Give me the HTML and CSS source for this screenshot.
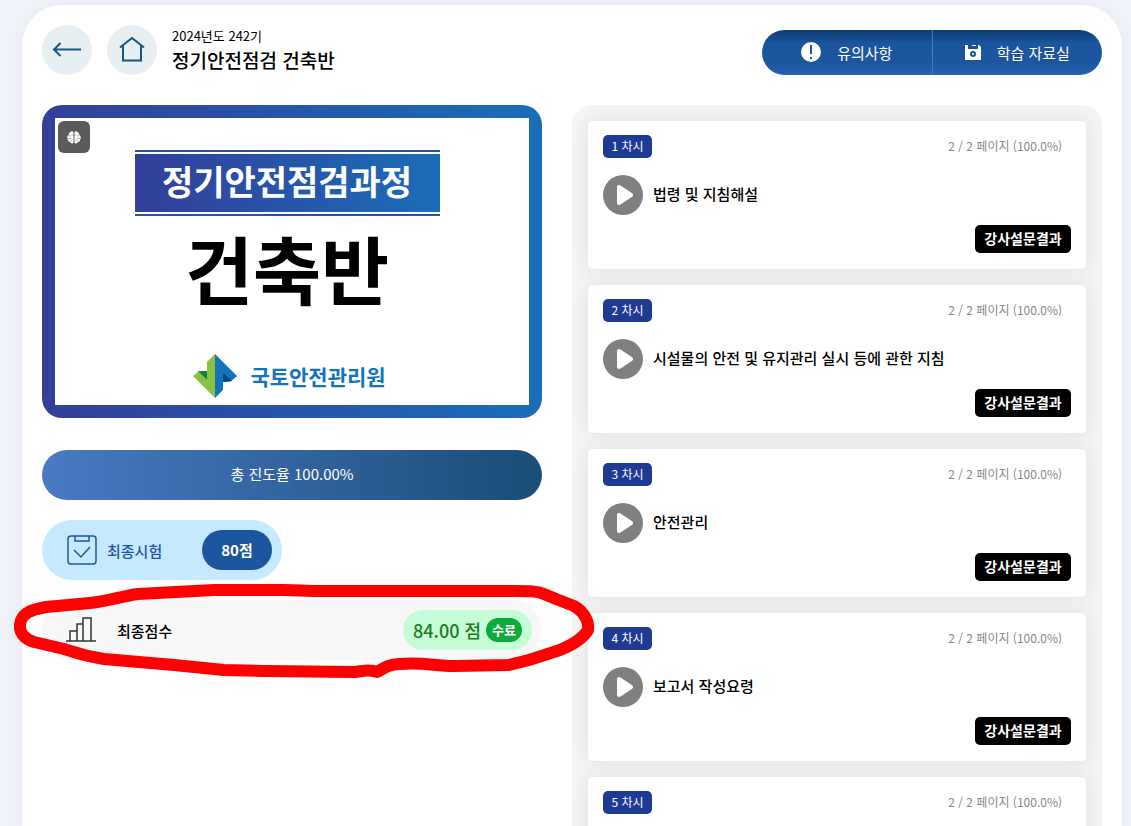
FILE: index.html
```html
<!DOCTYPE html>
<html lang="ko">
<head>
  <meta charset="UTF-8">
  <meta name="viewport" content="width=device-width, initial-scale=1.0">
  <title>정기안전점검 건축반</title>
  <link rel="stylesheet" href="styles.css">
</head>
<body>
  <div class="sheet">
    <header class="header">
      <a href="#" class="round-btn back" aria-label="뒤로">
        <svg width="30" height="18" viewBox="0 0 30 18" fill="none" stroke="#15587f" stroke-width="2"><path d="M29 8.500H2M8.500 2L2 8.500 8.500 15"/></svg>
      </a>
      <a href="#" class="round-btn home" aria-label="홈">
        <svg width="26" height="28" viewBox="0 0 26 28" fill="none" stroke="#15587f" stroke-width="2"><path d="M1 11.500L13 2l12 9.500M4 9.500v15h18v-15"/></svg>
      </a>
      <div class="title">
        <p>2024년도 242기</p>
        <h1>정기안전점검 건축반</h1>
      </div>
      <div class="top-menu">
        <button type="button">
          <svg width="20" height="20" viewBox="0 0 20 20"><circle cx="10" cy="10" r="10" fill="#fff"/><path d="M10 3v9M10 15v2" stroke="#1c57a0" stroke-width="2"/></svg>
          유의사항
        </button>
        <button type="button">
          <svg width="16" height="16" viewBox="0 0 16 16"><path fill="#fff" fill-rule="evenodd" d="M0 1h3v4h10V1h1l2 2v13H0zM8 7a3 3 0 1 0 0 6 3 3 0 0 0 0-6z"/><path fill="#fff" d="M7 1h4v1H7z"/><circle cx="8" cy="10" r="1" fill="#fff"/></svg>
          학습 자료실
        </button>
      </div>
    </header>

    <main class="content">
      <section class="left">
        <div class="cover">
          <div class="cover-inner">
            <span class="brain">
              <svg width="14" height="13" viewBox="0 0 14 13"><path fill="#fff" d="M6.500 1.500C6 0 4 0 3.500 1.200 2 1.300 1.500 3 2 4 0 4.500-.2 7 .8 8c-.3 2 1 3 2.200 3 .8 1.800 3 1.800 3.500.4zM7.500 1.500C8 0 10 0 10.500 1.200 12 1.300 12.500 3 12 4c2 .5 2.200 3 1.200 4 .3 2-1 3-2.200 3-.8 1.800-3 1.800-3.500.4z"/><path d="M2 4.500l2 .5M6.500 4H4.500M1 7.500h3l1 1M3 10l1.500-.5M12 4.500l-2 .5M7.500 4h2M13 7.500h-3l-1 1M11 10l-1.500-.5" fill="none" stroke="#5a5a5a" stroke-width=".5"/></svg>
            </span>
            <div class="ribbon"><span>정기안전점검과정</span></div>
            <strong class="cover-name">건축반</strong>
            <div class="org">
              <svg width="44" height="44" viewBox="0 0 44 44">
                <path fill="#8cc041" d="M22 0v44L0 22l6-5 8 9V8z"/>
                <path fill="#0e8240" d="M5 17h9v9z"/>
                <path fill="#1474bb" d="M22 0l22 22-9 6-5 0v8l-8 8z"/>
                <path fill="#1474bb" d="M30 18l14 4-7 6z"/>
                <path fill="#0c4491" d="M30 19l9 8-9 1z"/>
              </svg>
              국토안전관리원
            </div>
          </div>
        </div>

        <div class="progress">총 진도율 100.00%</div>

        <div class="exam">
          <svg width="30" height="30" viewBox="0 0 30 30" fill="none" stroke="#1c57a0" stroke-width="1.500"><rect x="1" y="1" width="28" height="28" rx="3"/><path d="M8 1v5h14V1M7 15l7 7 9-10"/></svg>
          <span class="exam-label">최종시험</span>
          <button type="button">80점</button>
        </div>

        <div class="score">
          <svg width="30" height="26" viewBox="0 0 30 26" fill="none" stroke="#333" stroke-width="1.500"><path d="M0 24h30M4 24V14h7v10M11 24V7h6v17M17 24V1h8v23"/></svg>
          <span class="score-label">최종점수</span>
          <span class="score-value">84.00 점 <em>수료</em></span>
          <svg class="marker" viewBox="0 0 580 100" fill="none" stroke="#f00" stroke-width="12" stroke-linejoin="round"><path d="M6 45C7 34 15 30 32 27L76 23C96 21 108 16 124 14L200 10 270 10 300 11H500C515 11 523 11 530 14L542 19 560 26C572 33 575 43 574 50 569 59 558 65 546 70L515 80 495 85 440 86C420 86 410 82 385 84 370 85 368 90 363 92 355 89 350 91 340 92L250 91 210 90 160 85 90 79C70 76 62 73 50 69L20 62C10 59 5 52 6 45Z"/></svg>
        </div>
      </section>

      <section class="lessons">
        <article class="lesson">
          <div class="lesson-top"><span class="badge">1 차시</span><span class="pages">2 / 2 페이지 (100.0%)</span></div>
          <div class="lesson-name">
            <button type="button" class="play" aria-label="재생"><svg width="16" height="20" viewBox="0 0 16 20"><path d="M2 2v16L14 10z" fill="#fff" stroke="#fff" stroke-width="4" stroke-linejoin="round"/></svg></button>
            <h2>법령 및 지침해설</h2>
          </div>
          <button type="button" class="survey">강사설문결과</button>
        </article>
        <article class="lesson">
          <div class="lesson-top"><span class="badge">2 차시</span><span class="pages">2 / 2 페이지 (100.0%)</span></div>
          <div class="lesson-name">
            <button type="button" class="play" aria-label="재생"><svg width="16" height="20" viewBox="0 0 16 20"><path d="M2 2v16L14 10z" fill="#fff" stroke="#fff" stroke-width="4" stroke-linejoin="round"/></svg></button>
            <h2>시설물의 안전 및 유지관리 실시 등에 관한 지침</h2>
          </div>
          <button type="button" class="survey">강사설문결과</button>
        </article>
        <article class="lesson">
          <div class="lesson-top"><span class="badge">3 차시</span><span class="pages">2 / 2 페이지 (100.0%)</span></div>
          <div class="lesson-name">
            <button type="button" class="play" aria-label="재생"><svg width="16" height="20" viewBox="0 0 16 20"><path d="M2 2v16L14 10z" fill="#fff" stroke="#fff" stroke-width="4" stroke-linejoin="round"/></svg></button>
            <h2>안전관리</h2>
          </div>
          <button type="button" class="survey">강사설문결과</button>
        </article>
        <article class="lesson">
          <div class="lesson-top"><span class="badge">4 차시</span><span class="pages">2 / 2 페이지 (100.0%)</span></div>
          <div class="lesson-name">
            <button type="button" class="play" aria-label="재생"><svg width="16" height="20" viewBox="0 0 16 20"><path d="M2 2v16L14 10z" fill="#fff" stroke="#fff" stroke-width="4" stroke-linejoin="round"/></svg></button>
            <h2>보고서 작성요령</h2>
          </div>
          <button type="button" class="survey">강사설문결과</button>
        </article>
        <article class="lesson">
          <div class="lesson-top"><span class="badge">5 차시</span><span class="pages">2 / 2 페이지 (100.0%)</span></div>
        </article>
      </section>
    </main>
  </div>
</body>
</html>
```
FILE: styles.css
```css
* {
  box-sizing: border-box;
}
body {
  margin: 0;
  padding: 5px 9px 0 22px;
  height: 100vh;
  overflow: hidden;
  background-color: #eff3f9;
  font-family: "Noto Sans CJK KR", sans-serif;
  color: #000;
}
button {
  border: none;
  padding: 0;
  font-family: inherit;
  cursor: pointer;
}
svg {
  flex: none;
}
p, h1, h2 {
  margin: 0;
}
.sheet {
  height: 100%;
  display: flex;
  flex-direction: column;
  gap: 30px;
  padding: 20px 20px 0;
  background-color: #fff;
  border-radius: 40px 40px 0 0;
  box-shadow: 0 0 20px rgba(0, 0, 0, 0.04);
}

/* header */
.header {
  display: flex;
  align-items: center;
  gap: 15px;
}
.round-btn {
  width: 50px;
  height: 50px;
  border-radius: 50%;
  display: flex;
  align-items: center;
  justify-content: center;
  background-color: #e8eff3;
}
.title p {
  font-size: 13px;
  line-height: 20px;
}
.title h1 {
  font-size: 19px;
  line-height: 28px;
  font-weight: 500;
}
.top-menu {
  margin-left: auto;
  display: flex;
  width: 340px;
  height: 45px;
  margin-top: 4px;
  border-radius: 23px;
  overflow: hidden;
}
.top-menu button {
  flex: 1;
  display: flex;
  align-items: center;
  justify-content: center;
  gap: 16px;
  background: linear-gradient(#0d3c72, #1b559d 30%, #1b559d 70%, #2363b3);
  color: #fff;
  font-size: 15px;
}
.top-menu button + button {
  border-left: 1px solid #3f7cc4;
}

/* two columns */
.content {
  flex: 1;
  min-height: 0;
  display: grid;
  grid-template-columns: 50fr 53fr;
  gap: 30px;
}
.cover {
  height: 313px;
  padding: 13px;
  border-radius: 20px;
  background: linear-gradient(90deg, #333f99, #1a6db8);
}
.cover-inner {
  position: relative;
  height: 100%;
  padding: 32px 10px 0 0;
  display: flex;
  flex-direction: column;
  align-items: center;
  background-color: #fff;
}
.brain {
  position: absolute;
  left: 3px;
  top: 3px;
  width: 32px;
  height: 32px;
  border-radius: 6px;
  display: flex;
  align-items: center;
  justify-content: center;
  background-color: #5a5a5a;
}
.ribbon {
  width: 305px;
  padding: 2px 0;
  border-top: 2px solid #2a54a2;
  border-bottom: 2px solid #2a54a2;
}
.ribbon span {
  display: block;
  padding-bottom: 4px;
  background: linear-gradient(90deg, #333f99, #1a6db8);
  color: #fff;
  font-size: 34px;
  line-height: 54px;
  font-weight: 700;
  text-align: center;
}
.cover-name {
  font-size: 74px;
  line-height: 102px;
  font-weight: 700;
}
.org {
  display: flex;
  align-items: center;
  gap: 13px;
  margin-top: 36px;
  margin-left: 5px;
  color: #1474bb;
  font-size: 21px;
  line-height: 30px;
  font-weight: 700;
}
.progress {
  height: 50px;
  margin-top: 32px;
  border-radius: 25px;
  background: linear-gradient(90deg, #4a7ac5, #1a4d77);
  color: #fff;
  font-size: 15px;
  line-height: 48px;
  text-align: center;
}
.exam {
  width: 240px;
  height: 60px;
  margin-top: 20px;
  padding: 0 10px 0 25px;
  display: flex;
  align-items: center;
  gap: 10px;
  border-radius: 30px;
  background-color: #c5e9ff;
}
.exam-label {
  color: #1c57a0;
  font-size: 15px;
  font-weight: 500;
}
.exam button {
  margin-left: auto;
  width: 70px;
  height: 40px;
  padding-bottom: 2px;
  border-radius: 20px;
  background-color: #1b559d;
  color: #fff;
  font-size: 15px;
  font-weight: 700;
}
.score {
  position: relative;
  height: 60px;
  margin-top: 20px;
  padding: 0 10px 0 24px;
  display: flex;
  align-items: center;
  gap: 21px;
  border-radius: 30px;
  background-color: #f8f8f8;
}
.score-label {
  font-size: 15px;
  font-weight: 500;
}
.score-value {
  margin-left: auto;
  height: 40px;
  padding: 0 10px;
  display: flex;
  align-items: center;
  gap: 5px;
  border-radius: 20px;
  background-color: #c5fdd9;
  color: #1d7a1d;
  font-size: 18px;
  font-weight: 500;
}
.score-value em {
  padding: 0 6px;
  border-radius: 12px;
  background-color: #0faa3c;
  color: #fff;
  font-size: 13px;
  line-height: 24px;
  font-style: normal;
  font-weight: 700;
}
.marker {
  position: absolute;
  left: -28px;
  top: -20px;
  width: 580px;
  height: 100px;
  pointer-events: none;
  z-index: 1;
}

/* lesson list */
.lessons {
  display: flex;
  flex-direction: column;
  gap: 14px;
  padding: 15px;
  border-radius: 20px 20px 0 0;
  background-color: #f5f5f5;
  overflow: hidden;
}
.lesson {
  flex: none;
  height: 150px;
  padding: 14px 15px;
  display: flex;
  flex-direction: column;
  border: 1px solid #ebebeb;
  border-radius: 5px;
  background-color: #fff;
  box-shadow: 0 0 20px rgba(0, 0, 0, 0.08);
}
.lesson-top {
  display: flex;
  justify-content: space-between;
}
.badge {
  min-width: 49px;
  height: 23px;
  border-radius: 5px;
  background-color: #1f3a93;
  color: #fff;
  font-size: 12px;
  line-height: 22px;
  text-align: center;
}
.pages {
  padding-right: 9px;
  color: #888;
  font-size: 12px;
  line-height: 22px;
}
.lesson-name {
  display: flex;
  align-items: center;
  gap: 10px;
  margin-top: 17px;
}
.lesson-name h2 {
  padding-bottom: 2px;
  font-size: 15px;
  line-height: 22px;
  font-weight: 500;
}
.play {
  width: 40px;
  height: 40px;
  padding-left: 4px;
  border-radius: 50%;
  display: flex;
  align-items: center;
  justify-content: center;
  background-color: #808080;
}
.survey {
  align-self: flex-end;
  margin-top: 10px;
  width: 96px;
  height: 28px;
  padding-bottom: 2px;
  border-radius: 5px;
  background-color: #000;
  color: #fff;
  font-size: 14px;
  font-weight: 700;
}
```
